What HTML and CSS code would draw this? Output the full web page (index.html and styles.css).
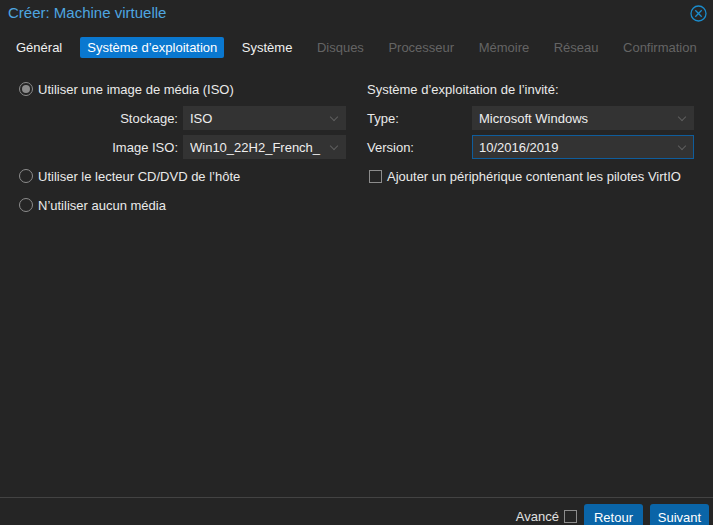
FILE: index.html
```html
<!DOCTYPE html>
<html lang="fr">
<head>
<meta charset="utf-8">
<title>Créer: Machine virtuelle</title>
<link rel="stylesheet" href="styles.css">
</head>
<body>
<div class="window">
  <header class="titlebar">
    <span class="title">Créer: Machine virtuelle</span>
    <svg class="close" width="17" height="17" viewBox="0 0 17 17">
      <circle cx="8.5" cy="8.5" r="7.5" fill="none" stroke="#1b8ccc" stroke-width="1.3"/>
      <path d="M5.3 5.3 L11.7 11.7 M11.7 5.3 L5.3 11.7" stroke="#1b8ccc" stroke-width="1.3"/>
    </svg>
  </header>
  <nav class="tabs">
    <span class="tab first">Général</span>
    <span class="tab active">Système d’exploitation</span>
    <span class="tab">Système</span>
    <span class="tab disabled">Disques</span>
    <span class="tab disabled">Processeur</span>
    <span class="tab disabled">Mémoire</span>
    <span class="tab disabled">Réseau</span>
    <span class="tab disabled">Confirmation</span>
  </nav>
  <main class="content">
    <section class="col">
      <div class="row">
        <span class="radio checked"></span>
        <span>Utiliser une image de média (ISO)</span>
      </div>
      <div class="field-row left">
        <label>Stockage:</label>
        <div class="combo"><span>ISO</span><i class="chev"></i></div>
      </div>
      <div class="field-row left">
        <label>Image ISO:</label>
        <div class="combo"><span>Win10_22H2_French_</span><i class="chev"></i></div>
      </div>
      <div class="row">
        <span class="radio"></span>
        <span>Utiliser le lecteur CD/DVD de l’hôte</span>
      </div>
      <div class="row">
        <span class="radio"></span>
        <span>N’utiliser aucun média</span>
      </div>
    </section>
    <section class="col">
      <div class="row">
        <span>Système d’exploitation de l’invité:</span>
      </div>
      <div class="field-row right">
        <label>Type:</label>
        <div class="combo"><span>Microsoft Windows</span><i class="chev"></i></div>
      </div>
      <div class="field-row right">
        <label>Version:</label>
        <div class="combo focus"><span>10/2016/2019</span><i class="chev"></i></div>
      </div>
      <div class="row cb-row">
        <span class="checkbox"></span>
        <span>Ajouter un périphérique contenant les pilotes VirtIO</span>
      </div>
    </section>
  </main>
  <footer class="footer">
    <span class="adv">Avancé</span>
    <span class="checkbox"></span>
    <button class="btn">Retour</button>
    <button class="btn">Suivant</button>
  </footer>
</div>
</body>
</html>
```
FILE: styles.css
```css
html, body {
  margin: 0;
  padding: 0;
  background: #252525;
}
body {
  font-family: "Liberation Sans", Arial, Helvetica, sans-serif;
  font-size: 13px;
  color: #eaeaea;
}
.window {
  width: 713px;
  height: 525px;
  display: flex;
  flex-direction: column;
  overflow: hidden;
}
.titlebar {
  height: 27px;
  flex: none;
  display: flex;
  align-items: center;
  justify-content: space-between;
  padding: 0 6px 0 8px;
}
.title {
  font-size: 15px;
  color: #4ea6e0;
  position: relative;
  top: -1px;
}
.close {
  display: block;
}
.tabs {
  display: flex;
  flex: none;
  gap: 10.5px;
  padding: 10px 0 0 9px;
  height: 21px;
}
.tab {
  height: 21px;
  line-height: 21px;
  padding: 0 7px;
  border-radius: 2px;
  color: #f0f0f0;
  white-space: nowrap;
}
.tab.first {
  margin-right: 0.5px;
}
.tab.active {
  background: #0a78d0;
  color: #ffffff;
}
.tab.disabled {
  color: #646464;
}
.content {
  flex: 1;
  display: grid;
  grid-template-columns: 327px 327px;
  column-gap: 21px;
  padding: 19px 19px 0 19px;
  align-content: start;
}
.col {
  display: flex;
  flex-direction: column;
  gap: 5px;
}
.row {
  height: 24px;
  display: flex;
  align-items: center;
  gap: 5px;
  white-space: nowrap;
}
.radio {
  width: 12px;
  height: 12px;
  border: 1px solid #8c8c8c;
  border-radius: 50%;
  box-sizing: content-box;
  display: inline-block;
  flex: none;
  position: relative;
}
.radio.checked::after {
  content: "";
  position: absolute;
  left: 2px;
  top: 2px;
  width: 8px;
  height: 8px;
  border-radius: 50%;
  background: #8c8c8c;
}
.checkbox {
  width: 11px;
  height: 11px;
  border: 1px solid #8c8c8c;
  display: inline-block;
  flex: none;
}
.cb-row {
  gap: 5px;
  padding-left: 2px;
}
.field-row {
  display: flex;
  align-items: center;
  height: 24px;
}
.field-row.left label {
  width: 159px;
  text-align: right;
  padding-right: 5px;
  flex: none;
}
.field-row.right label {
  width: 105px;
  flex: none;
}
.combo {
  flex: 1;
  height: 24px;
  box-sizing: border-box;
  background: #333333;
  border: 1px solid #333333;
  display: flex;
  align-items: center;
  padding: 0 6px;
  color: #eeeeee;
}
.combo span {
  flex: 1;
  overflow: hidden;
  white-space: nowrap;
}
.combo.focus {
  border-color: #0f5d9c;
}
.chev {
  width: 5px;
  height: 5px;
  border-right: 1px solid #5e5e5e;
  border-bottom: 1px solid #5e5e5e;
  transform: rotate(45deg);
  margin: 0 2px 3px 8px;
  flex: none;
}
.footer {
  height: 28px;
  flex: none;
  box-sizing: border-box;
  border-top: 1px solid #434343;
  display: flex;
  align-items: flex-start;
  justify-content: flex-end;
  padding: 6px 4px 0 0;
}
.adv {
  line-height: 24px;
  margin-top: 1px;
  margin-right: 5px;
  color: #e0e0e0;
}
.footer .checkbox {
  margin-top: 6px;
  margin-right: 7px;
}
.btn {
  font-family: inherit;
  font-size: 13px;
  color: #ffffff;
  background: #0a65a8;
  border: none;
  border-radius: 3px;
  height: 26px;
  width: 59px;
  padding: 0;
  margin-left: 7px;
  flex: none;
}
.footer .checkbox + .btn {
  margin-left: 0;
}
```
